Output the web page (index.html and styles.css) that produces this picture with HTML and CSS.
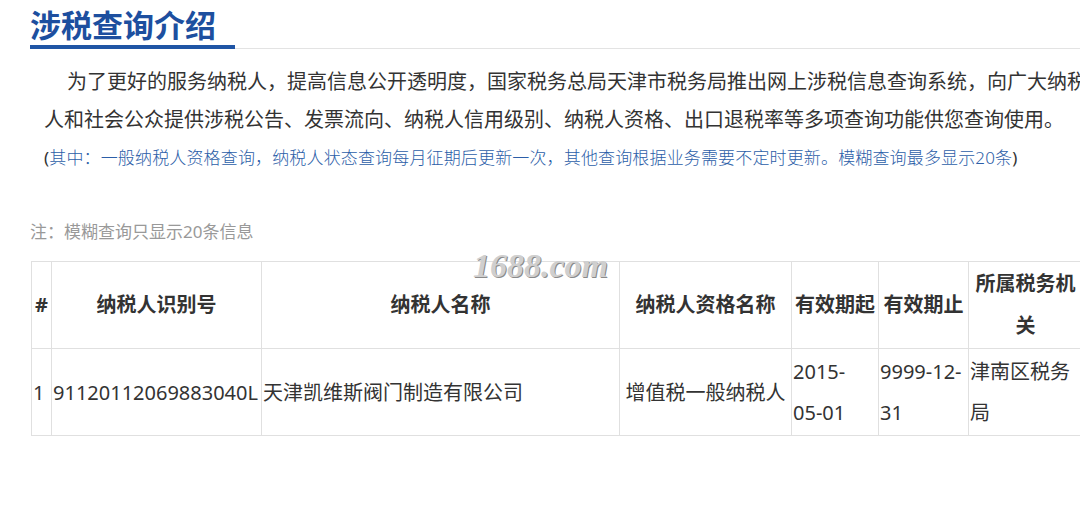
FILE: index.html
```html
<!DOCTYPE html>
<html lang="zh-CN">

<head>
    <meta charset="UTF-8">
    <meta name="viewport" content="width=device-width, initial-scale=1.0">
    <title>涉税查询介绍</title>
    <link rel="stylesheet" href="styles.css">
</head>

<body>
    <div class="page">
        <div class="title-bar">
            <h2 class="title">涉税查询介绍</h2>
        </div>

        <p class="intro">为了更好的服务纳税人，提高信息公开透明度，国家税务总局天津市税务局推出网上涉税信息查询系统，向广大纳税人和社会公众提供涉税公告、发票流向、纳税人信用级别、纳税人资格、出口退税率等多项查询功能供您查询使用。</p>
        <p class="intro-note">(<span>其中：一般纳税人资格查询，纳税人状态查询每月征期后更新一次，其他查询根据业务需要不定时更新。模糊查询最多显示20条</span>)</p>

        <p class="hint">注：模糊查询只显示20条信息</p>

        <div class="result">
            <span class="watermark">1688.com</span>
            <table class="result-table">
                <colgroup>
                    <col class="col-no">
                    <col class="col-id">
                    <col class="col-name">
                    <col class="col-type">
                    <col class="col-date">
                    <col class="col-date2">
                    <col class="col-office">
                </colgroup>
                <thead>
                    <tr>
                        <th>#</th>
                        <th>纳税人识别号</th>
                        <th>纳税人名称</th>
                        <th>纳税人资格名称</th>
                        <th>有效期起</th>
                        <th>有效期止</th>
                        <th>所属税务机关</th>
                    </tr>
                </thead>
                <tbody>
                    <tr>
                        <td>1</td>
                        <td>91120112069883040L</td>
                        <td>天津凯维斯阀门制造有限公司</td>
                        <td class="center">增值税一般纳税人</td>
                        <td><span class="nowrap">2015-</span><wbr><span class="nowrap">05-01</span></td>
                        <td><span class="nowrap">9999-12-</span><wbr><span class="nowrap">31</span></td>
                        <td>津南区税务局</td>
                    </tr>
                </tbody>
            </table>
        </div>
    </div>
</body>

</html>
```

FILE: styles.css
```css
html,
body {
    overflow: hidden;
}

body {
    margin: 0;
    background-color: #fff;
    font-family: "Noto Sans", "Noto Sans CJK SC", sans-serif;
    color: #333;
}

.page {
    width: 1070px;
    margin-left: 30px;
}

.title-bar {
    padding-top: 5px;
    border-bottom: 1px solid #e3e3e3;
}

.title {
    display: inline-block;
    margin: 0 0 -1px 0;
    padding-right: 19px;
    font-size: 31px;
    line-height: 40px;
    font-weight: bold;
    color: #1d4f9f;
    border-bottom: 4px solid #1f55a5;
}

.intro {
    margin: 14px 0 0 0;
    padding-left: 14px;
    text-indent: 23px;
    font-size: 20px;
    line-height: 38px;
    color: #333;
}

.intro-note {
    margin: 0;
    padding-left: 14px;
    font-size: 17px;
    line-height: 38px;
    letter-spacing: 0.15px;
    color: #333;
}

.intro-note span {
    color: #2c5ea8;
    font-weight: 300;
}

.hint {
    margin: 43px 0 0 0;
    font-size: 17px;
    line-height: 24px;
    color: #999;
}

.result {
    position: relative;
    margin: 17px 0 0 1px;
}

.watermark {
    position: absolute;
    top: -12px;
    left: 442px;
    z-index: 1;
    font-family: "Liberation Serif", serif;
    font-style: italic;
    font-weight: bold;
    font-size: 34px;
    line-height: 34px;
    color: #cfcfcf;
    text-shadow: 1px 1px 0 #8a8a8a;
}

.result-table {
    width: 1052px;
    table-layout: fixed;
    border-collapse: collapse;
    font-size: 20px;
}

.col-no { width: 20px; }
.col-id { width: 210px; }
.col-name { width: 358px; }
.col-type { width: 172px; }
.col-date { width: 87px; }
.col-date2 { width: 90px; }
.col-office { width: 114px; }

.result-table th,
.result-table td {
    border: 1px solid #e0e0e0;
    vertical-align: middle;
    padding: 1px;
}

.result-table th {
    height: 84px;
    line-height: 42px;
    font-weight: bold;
    text-align: center;
    color: #333;
}

.result-table td {
    height: 84px;
    line-height: 41px;
    text-align: left;
    color: #333;
}

.result-table td.center {
    text-align: center;
}

.nowrap {
    white-space: nowrap;
}
```
